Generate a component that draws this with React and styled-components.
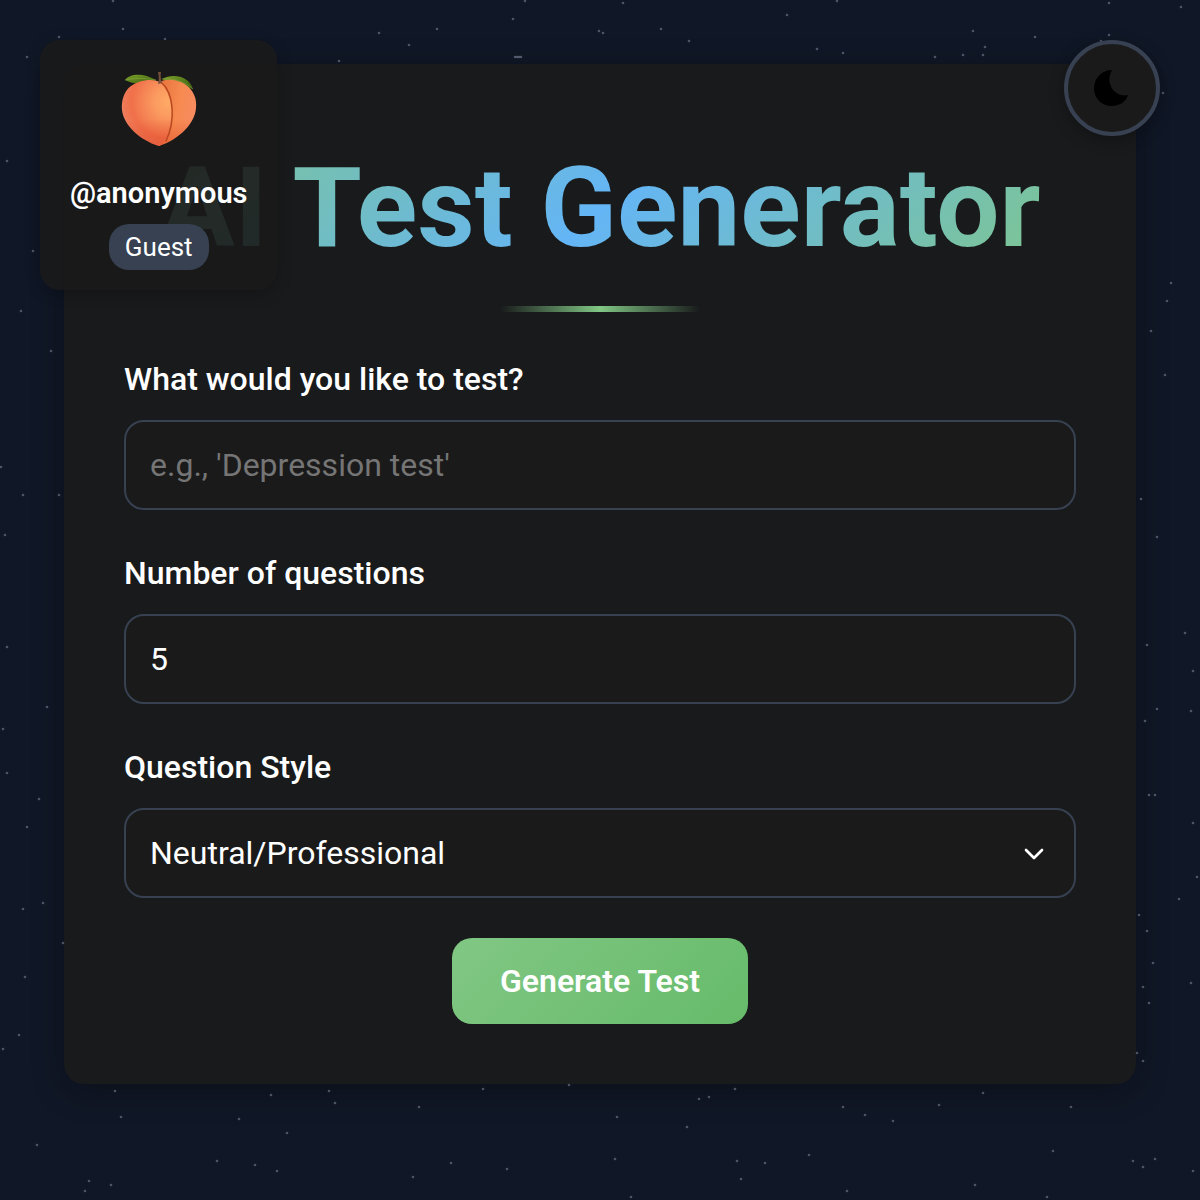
import React, { useState } from "react";
import styled, { createGlobalStyle } from "styled-components";

const GlobalStyle = createGlobalStyle`
  * {
    box-sizing: border-box;
  }
  body {
    margin: 0;
    background: #101726;
    color: #fff;
    font-family: Roboto, "Liberation Sans", sans-serif;
    line-height: 1.5;
  }
`;
const Page = styled.div`
  position: relative;
  min-height: 100vh;
  padding: 64px;
  overflow: hidden;
`;
const Sky = styled.svg`
  position: absolute;
  top: 0;
  left: 0;
  width: 100%;
  height: 100%;
  pointer-events: none;
  fill: #dbe4ff;
  fill-opacity: 0.3;
`;
const Card = styled.main`
  position: relative;
  padding: 60px;
  border-radius: 20px;
  background: #181a1b;
  box-shadow: 0 8px 32px rgba(0, 0, 0, 0.3);
`;
const Title = styled.h1`
  margin: 0;
  font-size: 112px;
  font-weight: 700;
  line-height: 168px;
  text-align: center;
  white-space: nowrap;
  color: transparent;
  background: linear-gradient(135deg, #81c784, #64b5f6, #81c784);
  background-clip: text;
  -webkit-background-clip: text;
`;
const Underline = styled.div`
  width: 200px;
  height: 6px;
  margin: 14px auto 44px;
  background: linear-gradient(90deg, transparent, #81c784, transparent);
`;
const Form = styled.form`
  display: flex;
  flex-direction: column;
  gap: 40px;
`;
const Field = styled.div`
  display: flex;
  flex-direction: column;
  gap: 18px;
`;
const Label = styled.label`
  font-size: 32px;
  font-weight: 500;
  line-height: 46px;
`;
const Input = styled.input`
  width: 100%;
  height: 90px;
  padding: 0 24px;
  border: 2px solid #374151;
  border-radius: 20px;
  background: #1a1a1a;
  color: #fff;
  font-family: inherit;
  font-size: 32px;
  outline: none;
  appearance: none;
  &::placeholder {
    color: #757575;
  }
  &[type="number"] {
    appearance: textfield;
  }
  &::-webkit-inner-spin-button {
    display: none;
  }
  &:focus {
    border-color: #81c784;
  }
`;
const SelectWrapper = styled.div`
  position: relative;
`;
const Chevron = styled.svg`
  position: absolute;
  top: 30px;
  right: 26px;
  width: 32px;
  height: 32px;
  fill: none;
  stroke: #fff;
  stroke-width: 2;
  stroke-linecap: round;
  stroke-linejoin: round;
  pointer-events: none;
`;
const GenerateButton = styled.button`
  align-self: center;
  height: 86px;
  padding: 0 48px;
  border: none;
  border-radius: 20px;
  background: linear-gradient(135deg, #81c784, #66bb6a);
  color: #fff;
  font-family: inherit;
  font-size: 32px;
  font-weight: 600;
  cursor: pointer;
`;
const Profile = styled.aside`
  position: absolute;
  top: 40px;
  left: 40px;
  z-index: 2;
  display: flex;
  flex-direction: column;
  align-items: center;
  padding: 28px 30px 20px;
  border-radius: 20px;
  background: rgba(26, 26, 26, 0.9);
  box-shadow: 0 4px 16px rgba(0, 0, 0, 0.2);
`;
const Peach = styled.svg`
  width: 80px;
  height: 80px;
`;
const Username = styled.div`
  margin: 24px 0 10px;
  font-size: 29px;
  font-weight: 600;
  line-height: 42px;
`;
const Badge = styled.span`
  padding: 0 16px;
  border-radius: 20px;
  background: #374151;
  font-size: 26px;
  line-height: 46px;
`;
const ThemeToggle = styled.button`
  position: absolute;
  top: 40px;
  right: 40px;
  z-index: 2;
  display: flex;
  align-items: center;
  justify-content: center;
  width: 96px;
  height: 96px;
  padding: 0;
  border: 4px solid #374151;
  border-radius: 50%;
  background: #1a1a1a;
  box-shadow: 0 4px 16px rgba(0, 0, 0, 0.3);
  cursor: pointer;
`;

const stars = [
  [113, 1], [525, 1], [513, 19], [123, 29], [59, 37], [165, 39], [27, 57],
  [379, 33], [437, 29], [409, 45], [339, 61], [599, 31], [515, 57], [517, 57],
  [519, 57], [521, 57], [623, 3], [603, 33], [661, 29], [689, 41], [787, 15],
  [837, 1], [817, 49], [843, 53], [935, 57], [963, 55], [983, 55], [985, 47],
  [973, 31], [1035, 37], [1109, 3], [1109, 35], [1101, 41], [1181, 7],
  [1163, 93], [7, 161], [33, 251], [21, 311], [51, 351], [1, 467], [23, 495],
  [59, 495], [5, 535], [7, 647], [47, 707], [3, 729], [7, 773], [39, 799],
  [27, 827], [43, 903], [23, 909], [63, 943], [25, 977], [19, 1035],
  [3, 1049], [1171, 283], [1167, 301], [1151, 331], [1165, 375],
  [1141, 499], [1157, 537], [1185, 633], [1147, 645], [1193, 671],
  [1157, 709], [1191, 711], [1145, 721], [1149, 795], [1155, 795],
  [1193, 823], [1197, 877], [1179, 899], [1139, 915], [1147, 931],
  [1153, 963], [1191, 983], [1143, 987], [1149, 1003], [1137, 1053],
  [1143, 1061], [115, 1091], [121, 1117], [37, 1145], [89, 1181],
  [85, 1191], [111, 1185], [271, 1095], [329, 1091], [335, 1103],
  [239, 1119], [287, 1133], [217, 1161], [255, 1165], [277, 1171],
  [419, 1107], [483, 1089], [569, 1085], [413, 1177], [451, 1163],
  [507, 1169], [617, 1117], [615, 1159], [631, 1197], [687, 1127],
  [699, 1099], [709, 1097], [735, 1089], [737, 1161], [765, 1163],
  [741, 1179], [809, 1155], [843, 1107], [865, 1115], [893, 1121],
  [939, 1105], [983, 1093], [847, 1191], [975, 1185], [1047, 1197],
  [1053, 1151], [1071, 1107], [1133, 1161], [1143, 1167], [1155, 1159],
  [1193, 1171],
];

const PeachIcon = () => (
  <Peach viewBox="0 0 80 80" aria-hidden="true">
    <defs>
      <radialGradient
        id="peachLeft"
        gradientUnits="userSpaceOnUse"
        cx="50"
        cy="34"
        r="50"
      >
        <stop offset="0" stopColor="#ffab66" />
        <stop offset="0.3" stopColor="#fb9a60" />
        <stop offset="0.75" stopColor="#f0704a" />
        <stop offset="0.92" stopColor="#ef7a58" />
        <stop offset="1" stopColor="#f09a78" />
      </radialGradient>
      <linearGradient id="peachRight" x1="0" y1="0.3" x2="1" y2="0.6">
        <stop offset="0" stopColor="#e8763f" />
        <stop offset="0.5" stopColor="#f68a50" />
        <stop offset="1" stopColor="#f98c62" />
      </linearGradient>
      <linearGradient id="peachLeaf" x1="0" y1="0" x2="1" y2="1">
        <stop offset="0" stopColor="#7da32a" />
        <stop offset="1" stopColor="#36580c" />
      </linearGradient>
      <linearGradient id="peachShade" x1="0" y1="0" x2="0" y2="1">
        <stop offset="0.6" stopColor="#de4b29" stopOpacity="0" />
        <stop offset="1" stopColor="#de4b29" stopOpacity="0.55" />
      </linearGradient>
    </defs>
    <path
      d="M6 12C10 6 24 4 37 12C28 18 16 17 6 12Z"
      fill="url(#peachLeaf)"
    />
    <path
      d="M43 11C54 5 70 8 74 21C64 19 52 15 43 11Z"
      fill="url(#peachLeaf)"
    />
    <path
      d="M6 12C15 10 25 10 37 12M43 11C54 10 65 13 74 21"
      fill="none"
      stroke="#92ad4c"
      strokeWidth="0.5"
    />
    <path
      d="M41 14C47 10 60 12 67 17C75 23 78 31 77 40C76 55 61 71 40 78C44 60 50 35 41 14Z"
      fill="url(#peachRight)"
    />
    <path
      d="M41 14C33 10 20 12 12 18C5 23 2 33 3 42C5 58 21 72 40 78C57 68 58 31 41 14Z"
      fill="url(#peachLeft)"
    />
    <path
      d="M41 14C33 10 20 12 12 18C5 23 2 33 3 42C5 58 21 72 40 78C61 71 76 55 77 40C78 31 75 23 67 17C60 12 47 10 41 14Z"
      fill="url(#peachShade)"
    />
    <path
      d="M42 14C56 26 56 54 47 73"
      fill="none"
      stroke="#b9471f"
      strokeWidth="1.5"
      strokeLinecap="round"
    />
    <path d="M39 4L42 4C41 8 42 11 43 15L39 16C40 12 40 8 39 4Z" fill="#76503a" />
  </Peach>
);

const MoonIcon = () => (
  <svg width="36" height="36" viewBox="0 0 36 36" aria-hidden="true">
    <path
      d="M18 0C8 0 0 8 0 18.500C0 28 7.500 36 17.500 36C25 36 32 32 34 25C22 28 10 14 18 0Z"
      fill="#000"
    />
  </svg>
);

const App = () => {
  const [topic, setTopic] = useState("");
  const [count, setCount] = useState(5);
  const [questionStyle, setQuestionStyle] = useState("neutral");

  return (
    <>
      <GlobalStyle />
      <Page>
        <Profile>
          <PeachIcon />
          <Username>@anonymous</Username>
          <Badge>Guest</Badge>
        </Profile>
        <ThemeToggle type="button" aria-label="Toggle theme">
          <MoonIcon />
        </ThemeToggle>
        <Card>
          <Title>AI Test Generator</Title>
          <Underline />
          <Form onSubmit={(e) => e.preventDefault()}>
            <Field>
              <Label htmlFor="topic">What would you like to test?</Label>
              <Input
                id="topic"
                type="text"
                placeholder="e.g., 'Depression test'"
                value={topic}
                onChange={(e) => setTopic(e.target.value)}
              />
            </Field>
            <Field>
              <Label htmlFor="count">Number of questions</Label>
              <Input
                id="count"
                type="number"
                min="1"
                value={count}
                onChange={(e) => setCount(e.target.value)}
              />
            </Field>
            <Field>
              <Label htmlFor="style">Question Style</Label>
              <SelectWrapper>
                <Input
                  as="select"
                  id="style"
                  value={questionStyle}
                  onChange={(e) => setQuestionStyle(e.target.value)}
                >
                  <option value="neutral">Neutral/Professional</option>
                </Input>
                <Chevron viewBox="0 0 24 24" aria-hidden="true">
                  <path d="m6 9 6 6 6-6" />
                </Chevron>
              </SelectWrapper>
            </Field>
            <GenerateButton type="submit">Generate Test</GenerateButton>
          </Form>
        </Card>
        <Sky aria-hidden="true">
          {stars.map(([x, y], i) => (
            <circle key={i} cx={x} cy={y} r="1.3" />
          ))}
        </Sky>
      </Page>
    </>
  );
};

export default App;
